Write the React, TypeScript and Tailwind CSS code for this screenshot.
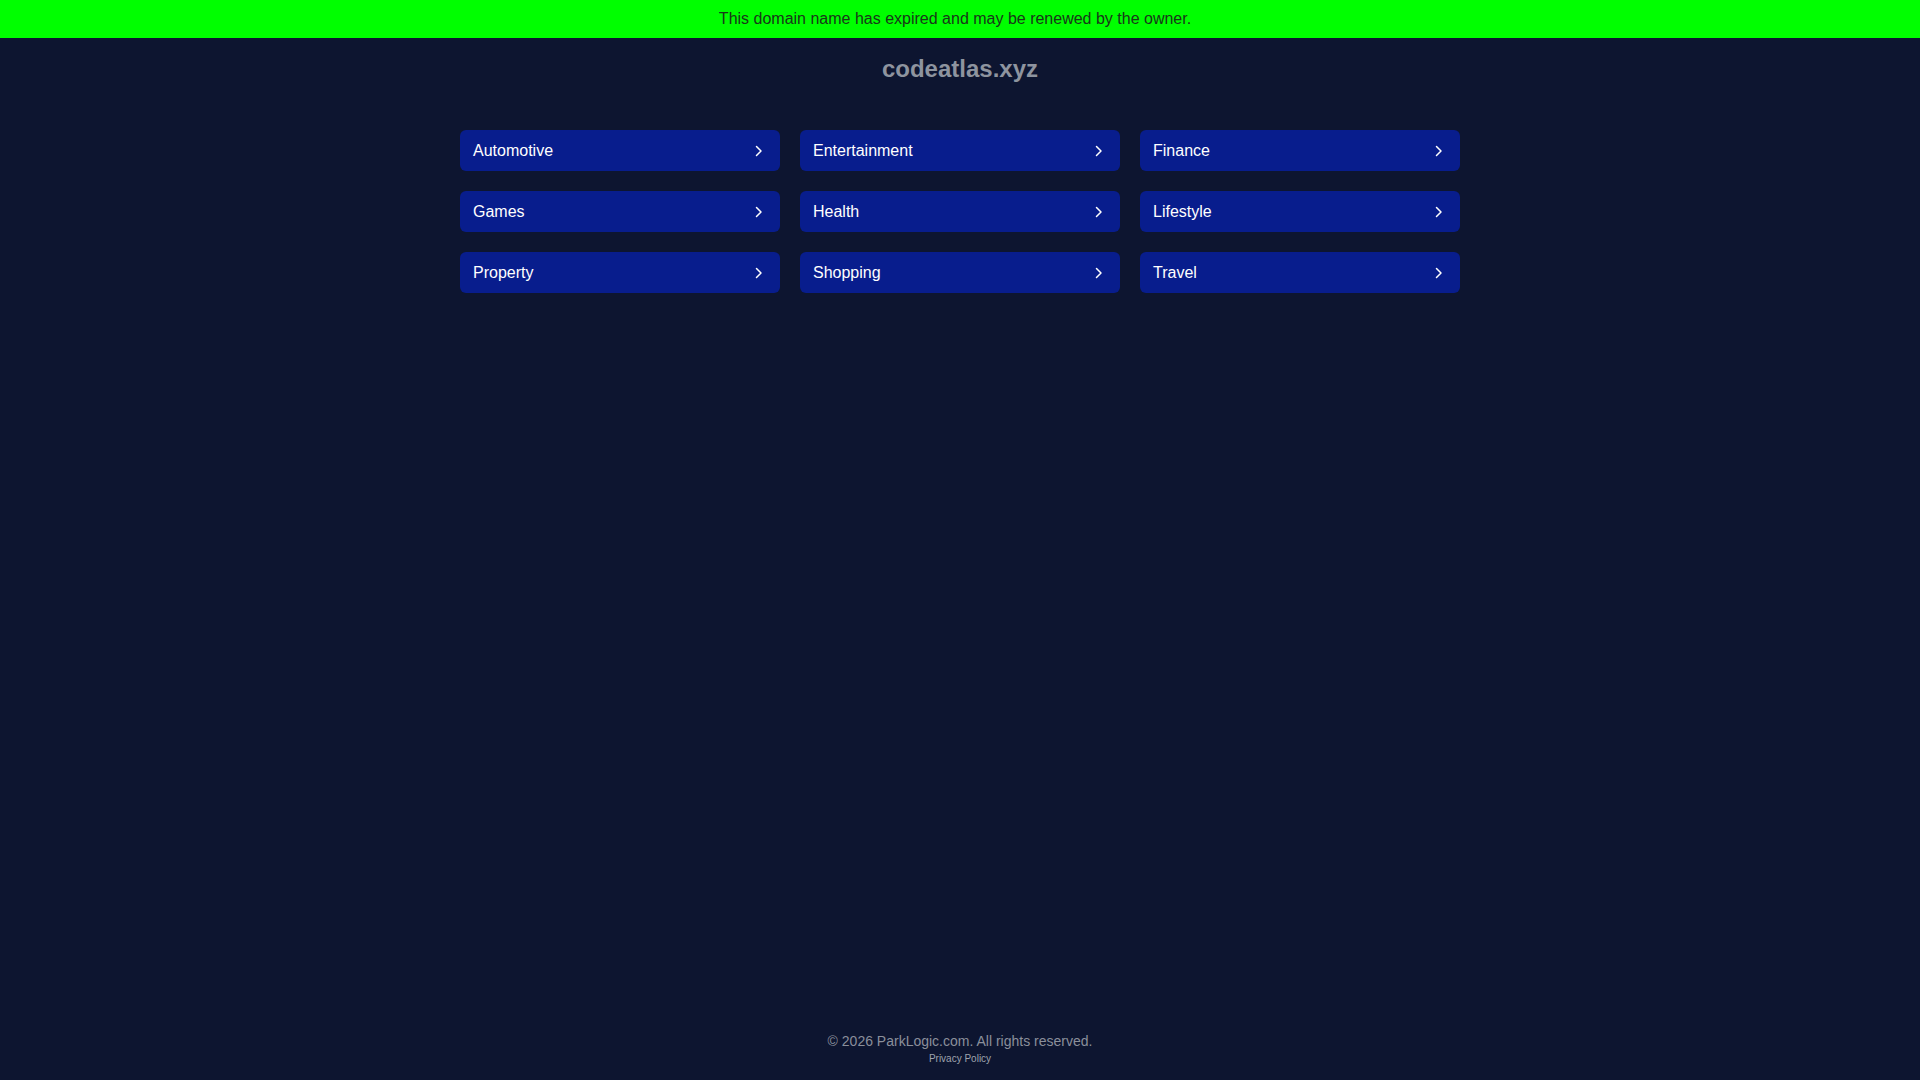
import React from "react";

const cats = [
  "Automotive",
  "Entertainment",
  "Finance",
  "Games",
  "Health",
  "Lifestyle",
  "Property",
  "Shopping",
  "Travel",
];

function Chevron() {
  return (
    <svg width="8" height="12" viewBox="0 0 8 12" fill="none" className="shrink-0">
      <polyline points="1.5,1.5 6,6 1.5,10.5" stroke="#ffffff" strokeWidth="1.5" strokeLinecap="round" strokeLinejoin="round" />
    </svg>
  );
}

export default function App() {
  return (
    <div
      className="min-h-screen flex flex-col bg-[#0d1530]"
      style={{ fontFamily: '"Liberation Sans", Arial, sans-serif' }}
    >
      <div className="h-[38px] bg-[#00ff00] flex items-center justify-center pr-[10px] text-[16px] text-[#1a361a]">
        This domain name has expired and may be renewed by the owner.
      </div>
      <h1 className="mt-[17px] text-center text-[24px] leading-[28px] font-bold text-[#8e949f]">
        codeatlas.xyz
      </h1>
      <div className="mt-[47px] mx-auto w-[1000px] grid grid-cols-3 gap-5">
        {cats.map((c) => (
          <a
            key={c}
            href="#"
            className="h-[41px] rounded-md bg-[#081d8d] flex items-center justify-between pl-[13px] pr-[17px] text-[16px] text-white"
          >
            <span>{c}</span>
            <Chevron />
          </a>
        ))}
      </div>
      <footer className="mt-auto pb-[15px] flex flex-col items-center">
        <div className="text-[14px] leading-[16px] text-[#8a8f9b]">
          © 2026 ParkLogic.com. All rights reserved.
        </div>
        <a href="#" className="mt-[4px] text-[10px] leading-[12px] text-[#9ea3ad]">
          Privacy Policy
        </a>
      </footer>
    </div>
  );
}
